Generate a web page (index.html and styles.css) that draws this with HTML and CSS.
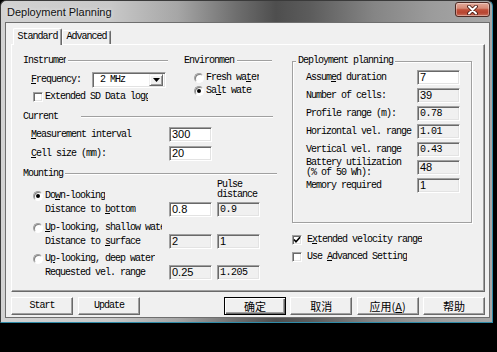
FILE: index.html
```html
<!DOCTYPE html>
<html>
<head>
<meta charset="utf-8">
<link rel="stylesheet" href="styles.css">
</head>
<body>
<div class="window">
  <div class="titlebar">
    <span class="title">Deployment Planning</span>
    <div class="close">
      <svg width="13" height="10" viewBox="0 0 13 10"><path d="M3 1.5 L10 8.5 M10 1.5 L3 8.5" stroke="#4a1a12" stroke-width="3.8" stroke-linecap="round"/><path d="M3 1.5 L10 8.5 M10 1.5 L3 8.5" stroke="#fff" stroke-width="2" stroke-linecap="round"/></svg>
    </div>
  </div>
  <div class="client">
    <div class="tabs">
      <div class="tab tab-active">Standard</div>
      <div class="tab">Advanced</div>
    </div>
    <div class="panel ui">
      <div class="col-left">
        <div class="top-row">
          <div class="sec-instr">
            <div class="hdr"><span class="hdr-label w-instr">Instrument</span><span class="hdr-line"></span></div>
            <div class="row-freq">
              <span class="lbl w-freq"><u>F</u>requency:</span>
              <div class="select sunken">
                <span class="select-value">2 MHz</span>
                <span class="select-btn"><svg width="7" height="4" viewBox="0 0 7 4"><path d="M0 0 H7 L3.5 4 Z" fill="#000"/></svg></span>
              </div>
            </div>
            <div class="opt opt-tall opt-sd"><span class="chk sunken"></span><span class="opt-text w-sd">Extended SD Data logger</span></div>
          </div>
          <div class="sec-env">
            <div class="hdr"><span class="hdr-label w-env">Environment</span><span class="hdr-line"></span></div>
            <div class="opt opt-tall env-a"><span class="radio"></span><span class="opt-text w-fresh">Fresh wa<u>t</u>er</span></div>
            <div class="opt opt-tall env-b"><span class="radio radio-on"></span><span class="opt-text w-salt">Sa<u>l</u>t water</span></div>
          </div>
        </div>

        <div class="hdr hdr-current"><span class="hdr-label w-current">Current</span><span class="hdr-line"></span></div>
        <div class="frow frow-first"><span class="lbl w-meas"><u>M</u>easurement interval</span><span class="field sunken field-white">300</span></div>
        <div class="frow"><span class="lbl w-meas"><u>C</u>ell size (mm):</span><span class="field sunken field-white">20</span></div>

        <div class="hdr hdr-mount"><span class="hdr-label w-mount">Mounting</span><span class="hdr-line"></span></div>
        <div class="mrow1">
          <div class="mrow1-left"><div class="opt"><span class="radio radio-on"></span><span class="opt-text">Do<u>w</u>n-looking</span></div></div>
          <div class="pulse">Pulse<br>distance</div>
        </div>
        <div class="drow"><span class="lbl w-dist">Distance to <u>b</u>ottom</span><span class="field sunken field-white">0.8</span><span class="field sunken mono">0.9</span></div>
        <div class="opt opt-gap"><span class="radio"></span><span class="opt-text w-shallow"><u>U</u>p-looking, shallow water</span></div>
        <div class="drow"><span class="lbl w-dist">Distance to <u>s</u>urface</span><span class="field sunken">2</span><span class="field sunken">1</span></div>
        <div class="opt opt-gap2"><span class="radio"></span><span class="opt-text">U<u>p</u>-looking, deep water</span></div>
        <div class="drow"><span class="lbl w-dist">Requested vel. range</span><span class="field sunken">0.25</span><span class="field sunken mono">1.205</span></div>
      </div>

      <div class="col-right">
        <div class="group">
          <span class="group-label">Deployment planning</span>
          <div class="prows">
            <div class="prow"><span class="lbl w-plab">Assum<u>e</u>d duration</span><span class="field sunken field-white">7</span></div>
            <div class="prow"><span class="lbl w-plab">Number of cells:</span><span class="field sunken">39</span></div>
            <div class="prow"><span class="lbl w-plab">Profile range (m):</span><span class="field sunken mono">0.78</span></div>
            <div class="prow"><span class="lbl w-plab">Horizontal vel. range</span><span class="field sunken mono">1.01</span></div>
            <div class="prow"><span class="lbl w-plab">Vertical vel. range</span><span class="field sunken mono">0.43</span></div>
            <div class="prow"><span class="lbl w-plab lbl-two">Battery utilization<br>(% of 50 Wh):</span><span class="field sunken">48</span></div>
            <div class="prow"><span class="lbl w-plab">Memory required</span><span class="field sunken">1</span></div>
          </div>
        </div>
        <div class="opt opt-tall chk-row-a"><span class="chk sunken"><svg width="8" height="8" viewBox="0 0 8 8"><path d="M1 3.5 L3 5.8 L7 1.2" stroke="#000" stroke-width="1.6" fill="none"/></svg></span><span class="opt-text chk-text">E<u>x</u>tended velocity range</span></div>
        <div class="opt opt-tall chk-row-b"><span class="chk sunken"></span><span class="opt-text chk-text">Use <u>A</u>dvanced Setting</span></div>
      </div>
    </div>
    <div class="buttons">
      <div class="btn ui">Start</div>
      <div class="btn ui">Update</div>
      <div class="btn-group">
        <div class="btn btn-default cjk">确定</div>
        <div class="btn cjk">取消</div>
        <div class="btn cjk">应用(<u>A</u>)</div>
        <div class="btn cjk">帮助</div>
      </div>
    </div>
  </div>
</div>
</body>
</html>
```

FILE: styles.css
```css
html, body {
  margin: 0;
  padding: 0;
}
body {
  background: #000;
  width: 497px;
  height: 352px;
  overflow: hidden;
}

.window {
  width: 493px;
  height: 323px;
  box-sizing: border-box;
  border: 1px solid #3a3a3a;
  border-right-color: #2f8ba8;
  border-bottom-color: #2f8ba8;
  border-radius: 6px 6px 0 0;
  padding: 0 2px 4px 4px;
  display: flex;
  flex-direction: column;
  background: linear-gradient(90deg, #d2d2d2 0%, #c9c9c9 22%, #a6a6a6 36%, #6e6e6e 48%, #4e4e4e 56%, #5c5c5c 63%, #858585 76%, #9c9c9c 88%, #a8a8a8 100%);
}

.titlebar {
  height: 21px;
  flex: none;
  display: flex;
  align-items: flex-start;
}
.title {
  font-family: "Liberation Sans", Arial, sans-serif;
  font-size: 11px;
  line-height: 14px;
  color: #111;
  margin: 4px 0 0 2px;
  text-shadow: 0 0 4px rgba(255,255,255,0.7);
}
.close {
  margin-left: auto;
  margin-top: 1px;
  width: 35px;
  height: 15px;
  box-sizing: border-box;
  border: 1px solid #4d2a24;
  border-radius: 3px;
  background: linear-gradient(180deg, #e2aa9a 0%, #d58a76 40%, #c0503a 52%, #b84632 75%, #c8705c 100%);
  box-shadow: inset 0 0 0 1px rgba(255,255,255,0.35);
  display: flex;
  align-items: center;
  justify-content: center;
}

.client {
  flex: 1;
  border: 1px solid #6e6e6e;
  background: #f0f0f0;
  padding: 5px 4px 0 5px;
  display: flex;
  flex-direction: column;
}

.ui, .tab {
  font-family: "Liberation Mono", "DejaVu Sans Mono", monospace;
  font-size: 10px;
  letter-spacing: -1px;
  line-height: 12px;
  color: #000;
}
.cjk {
  font-family: "Noto Sans CJK SC", sans-serif;
  font-size: 11px;
  color: #000;
}
u {
  text-underline-offset: 1px;
}

/* tabs */
.tabs {
  display: flex;
  align-items: flex-end;
  height: 16px;
  padding-left: 2px;
  position: relative;
  z-index: 1;
}
.tab {
  width: 49px;
  height: 14px;
  box-sizing: border-box;
  border-top: 1px solid #fff;
  border-left: 1px solid #fff;
  border-right: 1px solid #696969;
  box-shadow: inset -1px 0 #a0a0a0;
  border-radius: 2px 2px 0 0;
  text-align: center;
  background: #f0f0f0;
}
.tab-active {
  height: 17px;
  margin-bottom: -1px;
  padding-top: 2px;
}

/* panel */
.panel {
  height: 248px;
  box-sizing: border-box;
  border: 1px solid;
  border-color: #fff #696969 #696969 #fff;
  box-shadow: inset -1px -1px #a0a0a0;
  padding: 10px 0 0 11px;
  display: flex;
  gap: 15px;
}
.col-left {
  width: 254px;
  display: flex;
  flex-direction: column;
}
.col-right {
  width: 180px;
  padding-top: 6px;
  display: flex;
  flex-direction: column;
}

.top-row {
  display: flex;
  gap: 16px;
}
.sec-instr { width: 145px; }
.sec-env { width: 88px; }

.hdr {
  display: flex;
  align-items: center;
  height: 12px;
}
.hdr-label {
  flex: none;
  overflow: hidden;
  white-space: nowrap;
}
.hdr-line {
  flex: 1;
  height: 0;
  border-top: 1px solid #a0a0a0;
  border-bottom: 1px solid #fff;
  margin-left: 2px;
}
.w-instr { width: 43px; }
.w-env { width: 51px; }
.w-current { width: 56px; }
.w-mount { width: 41px; }
.hdr-current { margin-top: 8px; margin-right: 4px; }
.hdr-mount { margin-top: 7px; }
.hdr-mount .hdr-line { margin-left: 1px; }

.lbl {
  flex: none;
  white-space: nowrap;
}
.w-freq { width: 61px; }
.w-meas { width: 138px; }
.w-dist { width: 124px; }
.w-plab { width: 111px; }
.lbl-two { line-height: 9.5px; }

.row-freq {
  margin-top: 5px;
  height: 16px;
  padding-left: 8px;
  display: flex;
  align-items: center;
}

.sunken {
  box-sizing: border-box;
  border: 1px solid;
  border-color: #a0a0a0 #fff #fff #a0a0a0;
  box-shadow: inset 1px 1px #696969, inset -1px -1px #e3e3e3;
}

.select {
  width: 74px;
  height: 16px;
  background: #fff;
  display: flex;
  align-items: center;
  padding: 2px;
}
.select-value {
  flex: 1;
  padding-left: 5px;
}
.select-btn {
  width: 14px;
  height: 12px;
  box-sizing: border-box;
  background: #f0f0f0;
  border: 1px solid;
  border-color: #f0f0f0 #696969 #696969 #f0f0f0;
  box-shadow: inset 1px 1px #fff, inset -1px -1px #a0a0a0;
  display: flex;
  align-items: center;
  justify-content: center;
}

.opt {
  display: flex;
  align-items: center;
  height: 11px;
  padding-left: 10px;
}
.opt-tall { height: 12px; }
.opt-sd { margin-top: 3px; }
.env-a { margin-top: 5px; }
.env-b { margin-top: 1px; }
.opt-gap { margin-top: 5px; }
.opt-gap2 { margin-top: 4px; }
.opt-text {
  margin-left: 2px;
  white-space: nowrap;
  overflow: hidden;
}
.w-sd { width: 103px; }
.w-fresh { width: 53px; }
.w-salt { width: 46px; }
.w-shallow { width: 117px; }

.chk {
  flex: none;
  width: 10px;
  height: 10px;
  background: #fff;
  display: flex;
  align-items: center;
  justify-content: center;
}
.radio {
  flex: none;
  width: 10px;
  height: 10px;
  box-sizing: border-box;
  border-radius: 50%;
  border: 1px solid;
  border-color: #a0a0a0 #fff #fff #a0a0a0;
  box-shadow: inset 1px 1px #808080;
  background: #fff;
  display: flex;
  align-items: center;
  justify-content: center;
}
.radio-on::after {
  content: "";
  width: 4px;
  height: 4px;
  border-radius: 50%;
  background: #000;
}

.field {
  flex: none;
  width: 43px;
  height: 15px;
  background: #f0f0f0;
  font-family: "Liberation Sans", Arial, sans-serif;
  font-size: 11px;
  letter-spacing: 0;
  line-height: 13px;
  padding-left: 2px;
  white-space: nowrap;
  overflow: hidden;
}
.field.mono {
  font-family: "Liberation Mono", monospace;
  font-size: 10px;
  letter-spacing: -0.5px;
}
.field-white { background: #fff; }

.frow {
  display: flex;
  align-items: center;
  height: 15px;
  padding-left: 8px;
  margin-top: 4px;
}
.frow-first { margin-top: 4px; }

.mrow1 {
  display: flex;
  height: 21px;
}
.mrow1-left {
  width: 194px;
  display: flex;
  align-items: flex-end;
}
.mrow1-left .opt { width: 100%; }
.pulse {
  line-height: 9.5px;
  padding-top: 0;
}

.drow {
  display: flex;
  align-items: center;
  height: 15px;
  padding-left: 22px;
  margin-top: 1px;
  gap: 5px;
}
.drow .lbl { margin-right: -5px; }

/* right group */
.group {
  height: 162px;
  box-sizing: border-box;
  border: 1px solid #a0a0a0;
  box-shadow: inset 1px 1px #fff, 1px 1px #fff;
  display: flex;
  flex-direction: column;
}
.group-label {
  align-self: flex-start;
  margin: -7px 0 0 3px;
  padding: 0 2px;
  background: #f0f0f0;
  line-height: 12px;
  white-space: nowrap;
}
.prows {
  margin-top: 3px;
  display: flex;
  flex-direction: column;
  gap: 3px;
}
.prow {
  display: flex;
  align-items: center;
  height: 15px;
  padding-left: 13px;
}
.chk-row-a { margin-top: 11px; padding-left: 0; }
.chk-row-b { margin-top: 5px; padding-left: 0; }
.chk-text { margin-left: 5px; }

/* buttons */
.buttons {
  margin-top: 5px;
  display: flex;
  gap: 5px;
  height: 18px;
}
.btn {
  width: 62px;
  height: 18px;
  box-sizing: border-box;
  border: 1px solid;
  border-color: #fff #696969 #696969 #fff;
  box-shadow: inset -1px -1px #a0a0a0;
  background: #f0f0f0;
  display: flex;
  align-items: center;
  justify-content: center;
  line-height: 12px;
}
.btn-group {
  margin-left: auto;
  width: 261px;
  display: flex;
  justify-content: space-between;
}
.btn-default {
  border-color: #000;
  box-shadow: inset 1px 1px #fff, inset -1px -1px #696969, inset -2px -2px #a0a0a0;
}
```
